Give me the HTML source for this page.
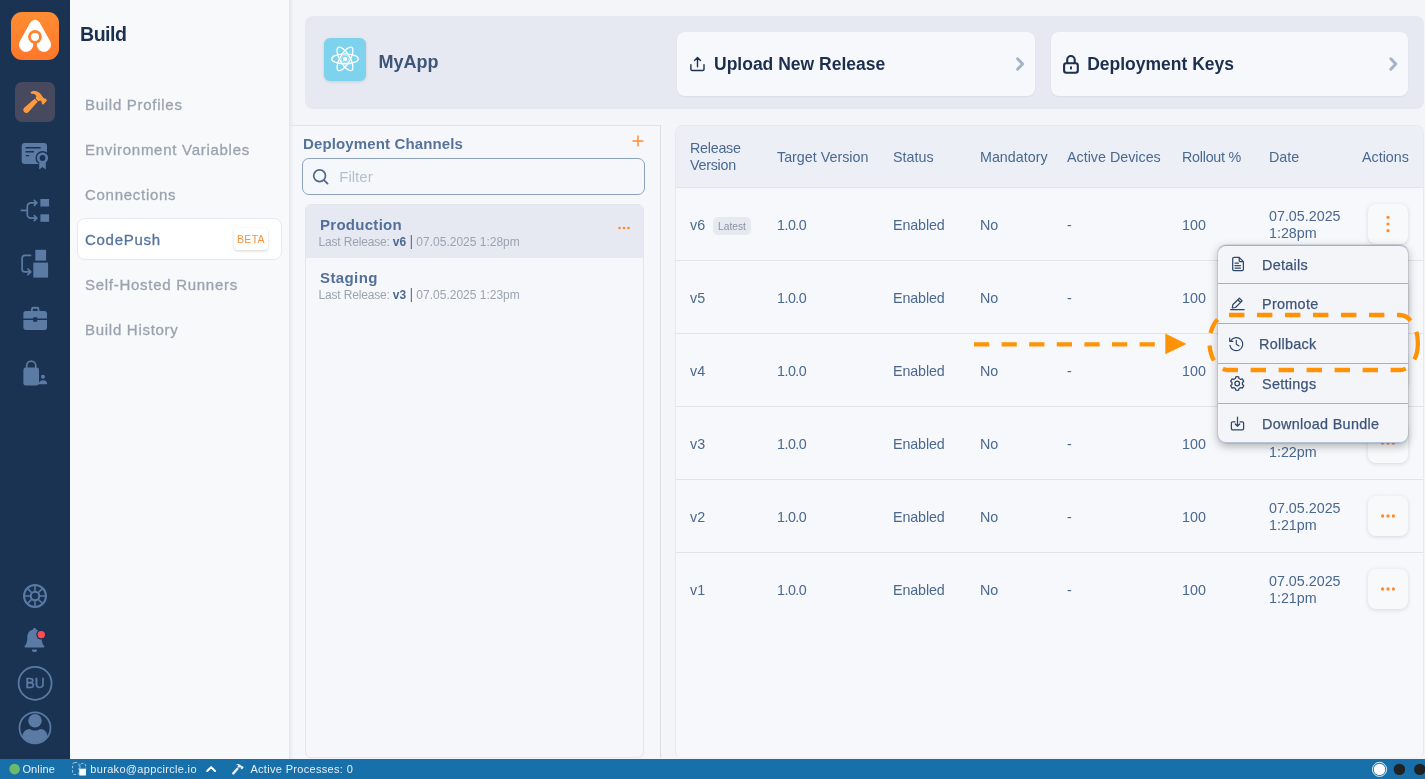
<!DOCTYPE html>
<html lang="en">
<head>
<meta charset="utf-8">
<title>CodePush - MyApp</title>
<style>
*{box-sizing:border-box;margin:0;padding:0}
html,body{width:1425px;height:779px;overflow:hidden}
body{font-family:"Liberation Sans",sans-serif;background:#f3f5f9;color:#4a6990;position:relative}
.abs{position:absolute}
#w{position:absolute;left:0;top:0;width:1425px;height:779px;will-change:transform}
#rail{left:0;top:0;width:70px;height:759px;background:#1a3352}
#nav{left:70px;top:0;width:219px;height:759px;background:#f8f9fb}
#nb{left:289px;top:0;width:5px;height:759px;background:linear-gradient(to right,#dfe4ed 0,#e9ecf2 35%,#f3f5f9 100%)}
#status{left:0;top:759px;width:1425px;height:20px;background:#1870ab;color:#e8eef5;font-size:11px;letter-spacing:.32px;line-height:14px}
#status span{position:absolute;top:3px;white-space:nowrap}
#nav h1{position:absolute;left:10px;top:23.200px;font-size:19.600px;line-height:22px;letter-spacing:-.5px;font-weight:700;color:#1b2f4f}
.ni{-webkit-text-stroke:.3px currentColor;position:absolute;left:15px;font-size:15px;letter-spacing:.72px;color:#9aa3b0;white-space:nowrap;line-height:18px}
#cp{left:7px;top:218px;width:205px;height:42px;background:#fff;border:1px solid #e6e9ef;border-radius:8px}
#beta{left:164px;top:227.500px;width:34px;height:22.500px;background:#fff;border-radius:4px;box-shadow:0 1px 3px rgba(0,0,0,.18);color:#ff8f34;font-size:10.5px;line-height:23px;text-align:center;letter-spacing:.3px}
#hdr{left:305px;top:16px;width:1119px;height:92.500px;background:#e6e9f1;border-radius:8px}
.card{background:#f7f8fb;border-radius:8px;box-shadow:0 1px 2px rgba(0,0,0,.05);height:64px;top:32px}
.card b{position:absolute;top:20.5px;font-size:17.5px;color:#1b2f4f;white-space:nowrap;line-height:22px}
#lp{left:289px;top:125px;width:372px;height:633px;background:linear-gradient(to right,#e1e6ee 0,#ecEff4 2px,#f6f7fa 5px);border-top:1px solid #e1e5ec;border-right:1px solid #d9dee8}
#tbl{left:675px;top:125px;width:749px;height:633px;background:#f7f8fb;border:1px solid #e6e9ef;border-bottom-color:#f2f4f8;border-radius:8px 8px 6px 6px;overflow:hidden}
#th{left:0;top:0;width:749px;height:62px;background:#eceff5;border-bottom:1px solid #e0e4ec}
.t{position:absolute;font-size:14.3px;line-height:17px;color:#4a6990;white-space:nowrap}
.row{position:absolute;left:0;width:749px;height:73px;border-bottom:1px solid #e0e4ec}
.btn{position:absolute;left:1368px;width:40px;height:40px;border-radius:8px;background:#f8f9fb;box-shadow:0 1px 4px rgba(30,50,90,.16)}
#menu{left:1218px;top:245px;width:190px;height:198px;background:#f3f5f9;border-radius:8px;box-shadow:0 3px 10px rgba(0,0,0,.3),0 0 0 1px rgba(120,140,170,.18),inset 0 1px 0 #a0b1cb,inset 0 -1px 0 rgba(140,160,195,.6)}
.mi{-webkit-text-stroke:.25px currentColor;position:absolute;left:44px;font-size:14.400px;letter-spacing:.3px;color:#3e5478;white-space:nowrap;line-height:18px}
.sep{position:absolute;left:0;width:190px;height:1px;background:#a0b1cb}
.ch{font-size:15px;font-weight:700;color:#53709a;line-height:18px;white-space:nowrap}
.lr{font-size:12px;color:#9aa4b1;line-height:14px;white-space:nowrap}
.lr b{color:#4a6990}
.lr i{font-style:normal;color:#66758f;font-size:14.500px;line-height:0;position:relative;top:.3px;margin:0 -.3px 0 0;font-weight:400}
.lr u{text-decoration:none;letter-spacing:-.17px}
</style>
</head>
<body>
<div id="w">
<div id="rail" class="abs"></div>
<svg class="abs" style="left:0;top:0" width="70" height="759" viewBox="0 0 70 759">
<defs><linearGradient id="lg" x1="0" y1="0" x2="0" y2="1"><stop offset="0" stop-color="#ff8d33"/><stop offset="1" stop-color="#ff772b"/></linearGradient></defs>
<rect x="11" y="12" width="48" height="48" rx="11" fill="url(#lg)"/>
<path d="M30.200 22.710A5.500 5.500 0 0 1 40.150 27.340L32.640 47.210A7.100 7.100 0 1 1 19.810 41.220ZM29.850 27.340A5.500 5.500 0 0 1 39.800 22.710L50.190 41.220A7.100 7.100 0 1 1 37.360 47.210Z" fill="#fff"/>
<circle cx="35" cy="36.800" r="5.400" fill="none" stroke="#ff842f" stroke-width="3.050"/>
<rect x="33.200" y="42.500" width="3.600" height="10" fill="#ff7e2d"/>
<circle cx="35" cy="36.800" r="3.900" fill="#fff"/>
<rect x="15" y="82" width="40" height="40" rx="7" fill="#474a5e"/>
<g fill="#ff9a3e"><path d="M34.600 98.700L37.700 101.700L28.600 111.900C27.400 113.200 25.400 113.300 24.200 112.100C23 110.900 23 109 24.200 107.800Z"/><path d="M30.500 92.200C32.500 90.800 36 90.600 38.500 92.200C40.500 93.400 42 95.500 42.800 97.200L44.200 98.400L45.600 98.600L47 100.400L43.200 104.800L41.600 103.300L41.600 101.600L40.400 100.600L38.300 101.200L35.600 98.600L36.300 96.400C35.800 94.800 34.600 93.800 33 93.800L31.500 94Z"/></g>
<g fill="#5b7ba5">
<rect x="21.700" y="143" width="25.300" height="21" rx="3"/>
</g>
<g fill="#1a3352"><rect x="25.500" y="147" width="15.300" height="1.500"/><rect x="25.500" y="151" width="8.500" height="1.500"/><rect x="25.800" y="155" width="3.400" height="1.300"/><circle cx="42.500" cy="158" r="7"/></g>
<g fill="#5b7ba5"><path d="M39.200 162.500h6.600v7l-3.300-2.600-3.300 2.600z"/><circle cx="42.500" cy="158" r="5.600"/></g>
<circle cx="42.500" cy="158" r="2.900" fill="#1a3352"/>
<g fill="#5b7ba5"><rect x="40.400" y="199" width="8.700" height="7.500"/><rect x="40.400" y="214.300" width="8.700" height="7.500"/>
<rect x="33.300" y="249.800" width="10.800" height="10.800" transform="translate(2 0)"/><rect x="33.300" y="262.600" width="14.800" height="15"/></g>
<g fill="none" stroke="#5b7ba5" stroke-width="1.7" stroke-linecap="round" stroke-linejoin="round">
<path d="M21.300 210.300h5.800M36.500 202.800h-5.600a3.600 3.600 0 0 0-3.600 3.600v8.200a3.600 3.600 0 0 0 3.600 3.600h5.600M34.300 200.300l2.600 2.500-2.600 2.500M34.300 215.700l2.600 2.500-2.600 2.500"/>
<path d="M30.500 255.400h-5.400a3 3 0 0 0-3 3v10.500a3 3 0 0 0 3 3h5M28 269.200l2.800 2.700-2.800 2.700"/>
</g>
<g fill="#5b7ba5">
<path d="M31 311v-1.800a2.400 2.400 0 0 1 2.400-2.400h3.600a2.400 2.400 0 0 1 2.400 2.400v1.800h5a2.600 2.600 0 0 1 2.600 2.600v4.800h-9.800v-1.200h-4v1.200h-9.800v-4.800a2.600 2.600 0 0 1 2.600-2.600zm1.800 0h4.800v-1.500a.8.800 0 0 0-.8-.8h-3.200a.8.800 0 0 0-.8.800z"/>
<path d="M23.400 320h9.800v1.700h4v-1.700h9.800v7.300a2.600 2.600 0 0 1-2.600 2.600h-18.400a2.600 2.600 0 0 1-2.600-2.600z"/>
<rect x="23.400" y="367.600" width="15.600" height="18" rx="2.400"/>
<circle cx="43" cy="376.800" r="2"/><path d="M38.800 384.300c0-2.500 1.700-4 4.200-4s4.200 1.500 4.200 4z"/>
</g>
<path d="M26.700 368v-2.400a4.500 4.500 0 0 1 9 0v2.400" fill="none" stroke="#5b7ba5" stroke-width="1.700"/>
<g fill="none" stroke="#5b7ba5"><circle cx="35" cy="596" r="11" stroke-width="2"/><circle cx="35" cy="596" r="4.300" stroke-width="2"/>
<path d="M35 585.500v6M35 600.500v6M24.500 596h6M39.500 596h6M27.600 588.600l4.200 4.200M38.200 599.200l4.200 4.200M42.400 588.600l-4.200 4.200M31.800 599.200l-4.200 4.200" stroke-width="1.500"/>
<circle cx="35.100" cy="683.300" r="16.500" stroke-width="1.700"/><circle cx="35" cy="727.900" r="15.500" stroke-width="1.700"/></g>
<g fill="#5b7ba5">
<g transform="translate(-.3 1.5)"><path d="M33 628.300a1.800 1.800 0 0 1 3.600 0c3.700.9 5.300 3.700 5.300 7.600 0 4.600 1 6.800 2.600 8.700.5.600.1 1.500-.7 1.500h-18.100c-.8 0-1.200-.9-.7-1.500 1.600-1.900 2.600-4.100 2.600-8.700 0-3.900 1.600-6.700 5.400-7.600z"/>
<path d="M32.200 648h5.200a2.600 2.600 0 0 1-5.200 0z"/></g>
<circle cx="35" cy="720.700" r="6.800"/>
<path d="M22.300 736.500c.6-5 3.600-7.200 7.600-7.400 1.500 1 3.200 1.500 5.100 1.500s3.600-.5 5.100-1.500c4 .2 7 2.400 7.600 7.400a15.600 15.600 0 0 1-25.400 0z"/>
</g>
<circle cx="41.300" cy="634.600" r="5" fill="#1a3352"/><circle cx="41.300" cy="634.600" r="3.700" fill="#ff4a55"/>
<text x="35.200" y="688.300" text-anchor="middle" font-family="Liberation Sans, sans-serif" font-size="13.800" font-weight="400" fill="#5b7ba5" stroke="#5b7ba5" stroke-width=".5">BU</text>
</svg>
<div id="nav" class="abs">
  <h1>Build</h1>
  <div class="ni" style="top:96px">Build Profiles</div>
  <div class="ni" style="top:141px">Environment Variables</div>
  <div class="ni" style="top:186px">Connections</div>
  <div id="cp" class="abs"></div>
  <div class="ni" style="top:231px;color:#5673a0">CodePush</div>
  <div id="beta" class="abs">BETA</div>
  <div class="ni" style="top:276px">Self-Hosted Runners</div>
  <div class="ni" style="top:321px">Build History</div>
</div>
<div id="nb" class="abs"></div>
<div id="hdr" class="abs"></div>
<div class="abs" style="left:324px;top:38px;width:42px;height:43px;border-radius:6px;background:#7dd3ee;box-shadow:0 1px 3px rgba(0,0,0,.12)"></div>
<div class="abs" style="left:378.500px;top:50.700px;font-size:18px;font-weight:700;color:#3e5478;line-height:22px">MyApp</div>
<div class="abs card" style="left:677px;width:358px"><b style="left:37px">Upload New Release</b></div>
<div class="abs card" style="left:1051px;width:357px"><b style="left:36.200px">Deployment Keys</b></div>
<svg class="abs" style="left:324px;top:38px" width="42" height="43" viewBox="0 0 42 43" fill="none" stroke="#fff" stroke-width="1.250"><g transform="translate(21 20.900)"><ellipse rx="13.300" ry="5"/><ellipse rx="13.300" ry="5" transform="rotate(60)"/><ellipse rx="13.300" ry="5" transform="rotate(120)"/><circle r="2.200" fill="#fff" stroke="none"/><circle r="3.700" stroke-width=".7" opacity=".6"/></g></svg>
<svg class="abs" style="left:686px;top:52px" width="24" height="24" viewBox="686 52 24 24" fill="none" stroke="#1b2f4f" stroke-width="1.400" stroke-linecap="round" stroke-linejoin="round"><path d="M690.900 64.800v4.400a1.300 1.300 0 0 0 1.300 1.300h10.500a1.300 1.300 0 0 0 1.300-1.300v-4.400M697.500 66.800v-9M694.500 60.600l3-3 3 3"/></svg>
<svg class="abs" style="left:1058px;top:50px" width="26" height="28" viewBox="1058 50 26 28" fill="none" stroke="#1b2f4f" stroke-width="2.100" stroke-linejoin="round"><rect x="1064.100" y="63.200" width="13.700" height="9.600" rx="2.200"/><path d="M1067.200 63v-3.200a3.750 3.750 0 0 1 7.500 0v3.200"/><rect x="1070" y="66.400" width="1.900" height="3" fill="#1b2f4f" stroke="none"/></svg>
<svg class="abs" style="left:1010px;top:52px" width="20" height="24" viewBox="1010 52 20 24" fill="none" stroke="#a3b3ca" stroke-width="3" stroke-linecap="round" stroke-linejoin="round"><path d="M1017.600 58.800l5 5.200-5 5.200"/></svg>
<svg class="abs" style="left:1383px;top:52px" width="20" height="24" viewBox="1383 52 20 24" fill="none" stroke="#a3b3ca" stroke-width="3" stroke-linecap="round" stroke-linejoin="round"><path d="M1390.800 58.800l5 5.200-5 5.200"/></svg>
<div id="lp" class="abs"></div>
<div class="abs" style="left:303px;top:134.800px;font-size:15px;font-weight:700;letter-spacing:.13px;color:#56739b;line-height:18px;white-space:nowrap">Deployment Channels</div>
<svg class="abs" style="left:631px;top:134px" width="14" height="14" viewBox="0 0 14 14"><path d="M7 1.500v11M1.500 7h11" stroke="#ff8a30" stroke-width="1.400" fill="none"/></svg>
<div class="abs" style="left:302px;top:158px;width:343px;height:37px;border:1px solid #8da2c0;border-radius:7px;background:#f6f7fa"></div>
<svg class="abs" style="left:311px;top:167px" width="20" height="20" viewBox="0 0 20 20"><circle cx="8.600" cy="8.700" r="5.900" fill="none" stroke="#4a6990" stroke-width="1.700"/><path d="M13 13.200l3.600 3.500" stroke="#4a6990" stroke-width="1.700" stroke-linecap="round"/></svg>
<div class="abs" style="left:339.300px;top:167.800px;font-size:15px;color:#b3bfd1;line-height:18px">Filter</div>
<div class="abs" style="left:305px;top:204px;width:339px;height:554px;border:1px solid #e3e6ed;border-radius:6px;background:#f6f7fa;overflow:hidden"><div style="height:54px;background:#e6e9f1;margin:-1px -1px 0 -1px"></div></div>
<div class="abs ch" style="left:320px;top:215.800px;letter-spacing:.28px">Production</div>
<div class="abs lr" style="left:318.500px;top:235.100px"><u>Last Release: </u><b>v6</b> <i>|</i> 07.05.2025 1:28pm</div>
<div class="abs ch" style="left:320px;top:268.600px;letter-spacing:.4px">Staging</div>
<div class="abs lr" style="left:318.500px;top:288.100px"><u>Last Release: </u><b>v3</b> <i>|</i> 07.05.2025 1:23pm</div>
<svg class="abs" style="left:617px;top:225px" width="14" height="6" viewBox="0 0 14 6"><g fill="#ff8a30"><circle cx="2.500" cy="3" r="1.300"/><circle cx="7" cy="3" r="1.300"/><circle cx="11.500" cy="3" r="1.300"/></g></svg>
<div id="tbl" class="abs"><div id="th" class="abs"></div>
<div class="row" style="top:62px"></div>
<div class="row" style="top:135px"></div>
<div class="row" style="top:208px"></div>
<div class="row" style="top:281px"></div>
<div class="row" style="top:354px"></div>
<div class="row" style="top:427px;border-bottom:0"></div>
</div>
<div class="t" style="left:690px;top:140px;letter-spacing:-.25px">Release<br>Version</div>
<div class="t" style="left:777px;top:148.5px">Target Version</div>
<div class="t" style="left:893px;top:148.5px">Status</div>
<div class="t" style="left:980px;top:148.5px">Mandatory</div>
<div class="t" style="left:1067px;top:148.5px">Active Devices</div>
<div class="t" style="left:1182px;top:148.5px;letter-spacing:-.25px">Rollout %</div>
<div class="t" style="left:1269px;top:148.5px">Date</div>
<div class="t" style="left:1362px;top:148.5px">Actions</div>
<div class="t" style="left:690px;top:216.5px">v6</div><div class="t" style="left:777px;top:216.5px;letter-spacing:-.5px">1.0.0</div><div class="t" style="left:893px;top:216.5px;letter-spacing:-.12px">Enabled</div><div class="t" style="left:980px;top:216.5px">No</div><div class="t" style="left:1067px;top:216.5px">-</div><div class="t" style="left:1182px;top:216.5px">100</div><div class="t" style="left:1269px;top:207.5px">07.05.2025<br>1:28pm</div><div class="btn" style="top:204px"></div>
<div class="t" style="left:690px;top:289.5px">v5</div><div class="t" style="left:777px;top:289.5px;letter-spacing:-.5px">1.0.0</div><div class="t" style="left:893px;top:289.5px;letter-spacing:-.12px">Enabled</div><div class="t" style="left:980px;top:289.5px">No</div><div class="t" style="left:1067px;top:289.5px">-</div><div class="t" style="left:1182px;top:289.5px">100</div><div class="t" style="left:1269px;top:280.5px">07.05.2025<br>1:27pm</div><div class="btn" style="top:277px"></div>
<svg class="abs" style="left:1380px;top:293px" width="16" height="8" viewBox="0 0 16 8"><g fill="#ff8a30"><circle cx="2.600" cy="4" r="1.650"/><circle cx="8" cy="4" r="1.650"/><circle cx="13.400" cy="4" r="1.650"/></g></svg>
<div class="t" style="left:690px;top:362.5px">v4</div><div class="t" style="left:777px;top:362.5px;letter-spacing:-.5px">1.0.0</div><div class="t" style="left:893px;top:362.5px;letter-spacing:-.12px">Enabled</div><div class="t" style="left:980px;top:362.5px">No</div><div class="t" style="left:1067px;top:362.5px">-</div><div class="t" style="left:1182px;top:362.5px">100</div><div class="t" style="left:1269px;top:353.5px">07.05.2025<br>1:25pm</div><div class="btn" style="top:350px"></div>
<svg class="abs" style="left:1380px;top:366px" width="16" height="8" viewBox="0 0 16 8"><g fill="#ff8a30"><circle cx="2.600" cy="4" r="1.650"/><circle cx="8" cy="4" r="1.650"/><circle cx="13.400" cy="4" r="1.650"/></g></svg>
<div class="t" style="left:690px;top:435.5px">v3</div><div class="t" style="left:777px;top:435.5px;letter-spacing:-.5px">1.0.0</div><div class="t" style="left:893px;top:435.5px;letter-spacing:-.12px">Enabled</div><div class="t" style="left:980px;top:435.5px">No</div><div class="t" style="left:1067px;top:435.5px">-</div><div class="t" style="left:1182px;top:435.5px">100</div><div class="t" style="left:1269px;top:426.5px">07.05.2025<br>1:22pm</div><div class="btn" style="top:423px"></div>
<svg class="abs" style="left:1380px;top:439px" width="16" height="8" viewBox="0 0 16 8"><g fill="#ff8a30"><circle cx="2.600" cy="4" r="1.650"/><circle cx="8" cy="4" r="1.650"/><circle cx="13.400" cy="4" r="1.650"/></g></svg>
<div class="t" style="left:690px;top:508.5px">v2</div><div class="t" style="left:777px;top:508.5px;letter-spacing:-.5px">1.0.0</div><div class="t" style="left:893px;top:508.5px;letter-spacing:-.12px">Enabled</div><div class="t" style="left:980px;top:508.5px">No</div><div class="t" style="left:1067px;top:508.5px">-</div><div class="t" style="left:1182px;top:508.5px">100</div><div class="t" style="left:1269px;top:499.5px">07.05.2025<br>1:21pm</div><div class="btn" style="top:496px"></div>
<svg class="abs" style="left:1380px;top:512px" width="16" height="8" viewBox="0 0 16 8"><g fill="#ff8a30"><circle cx="2.600" cy="4" r="1.650"/><circle cx="8" cy="4" r="1.650"/><circle cx="13.400" cy="4" r="1.650"/></g></svg>
<div class="t" style="left:690px;top:581.5px">v1</div><div class="t" style="left:777px;top:581.5px;letter-spacing:-.5px">1.0.0</div><div class="t" style="left:893px;top:581.5px;letter-spacing:-.12px">Enabled</div><div class="t" style="left:980px;top:581.5px">No</div><div class="t" style="left:1067px;top:581.5px">-</div><div class="t" style="left:1182px;top:581.5px">100</div><div class="t" style="left:1269px;top:572.5px">07.05.2025<br>1:21pm</div><div class="btn" style="top:569px"></div>
<svg class="abs" style="left:1380px;top:585px" width="16" height="8" viewBox="0 0 16 8"><g fill="#ff8a30"><circle cx="2.600" cy="4" r="1.650"/><circle cx="8" cy="4" r="1.650"/><circle cx="13.400" cy="4" r="1.650"/></g></svg>
<svg class="abs" style="left:1384px;top:213px" width="8" height="22" viewBox="0 0 8 22"><g fill="#ff8a30"><circle cx="4" cy="4.300" r="1.600"/><circle cx="4" cy="11" r="1.600"/><circle cx="4" cy="17.700" r="1.600"/></g></svg>
<div class="abs" style="left:713px;top:217.300px;width:38px;height:17.500px;border-radius:5px;background:#e6e9f0;color:#8a94a3;font-size:10.200px;line-height:19px;text-align:center">Latest</div>
<div id="menu" class="abs"><div class="sep" style="top:38px"></div><div class="sep" style="top:78px"></div><div class="sep" style="top:118px"></div><div class="sep" style="top:158px"></div><div class="mi" style="left:44px;top:10.9px">Details</div><div class="mi" style="left:44px;top:49.7px">Promote</div><div class="mi" style="left:41px;top:90.2px">Rollback</div><div class="mi" style="left:44px;top:130.2px">Settings</div><div class="mi" style="left:44px;top:170.3px">Download Bundle</div></div>
<svg class="abs" style="left:1220px;top:250px" width="40" height="190" viewBox="1220 250 40 190" fill="none" stroke="#2f4668" stroke-width="1.250" stroke-linecap="round" stroke-linejoin="round">
<path d="M1234 257.400h5.200l4.200 4.200v7.700a1.300 1.300 0 0 1-1.300 1.300h-8.100a1.300 1.300 0 0 1-1.300-1.300v-10.600a1.300 1.300 0 0 1 1.300-1.300zM1239.200 257.400v3a1.200 1.200 0 0 0 1.200 1.200h3M1235 263h3.500M1235 265.500h5.500M1235 268h5.500"/>
<path d="M1239.400 298.200l2.700 2.700-6.600 6.600-3.200.500.500-3.200zM1237.800 299.800l2.700 2.700M1230.600 309.600h13.500"/>
<path d="M1230.600 341A6.500 6.500 0 1 1 1229.900 345.300M1229.700 338.100v3.200h3.200M1236.300 340.400v3.900l2.700 1.700" stroke-width="1.150"/>
<path d="M1235.79 376.85A6.8 6.8 0 0 1 1238.61 376.85L1239.00 378.51A5.3 5.3 0 0 1 1240.62 379.45L1242.25 378.95A6.8 6.8 0 0 1 1243.67 381.40L1242.42 382.56A5.3 5.3 0 0 1 1242.42 384.44L1243.67 385.60A6.8 6.8 0 0 1 1242.25 388.05L1240.62 387.55A5.3 5.3 0 0 1 1239.00 388.49L1238.61 390.15A6.8 6.8 0 0 1 1235.79 390.15L1235.40 388.49A5.3 5.3 0 0 1 1233.78 387.55L1232.15 388.05A6.8 6.8 0 0 1 1230.73 385.60L1231.98 384.44A5.3 5.3 0 0 1 1231.98 382.56L1230.73 381.40A6.8 6.8 0 0 1 1232.15 378.95L1233.78 379.45A5.3 5.3 0 0 1 1235.40 378.51Z" stroke-width="1.300"/><circle cx="1237.200" cy="383.500" r="2.300" stroke-width="1.300"/>
<path d="M1235 421.800h-2.300a1.300 1.300 0 0 0-1.300 1.300v5.500a1.300 1.300 0 0 0 1.300 1.300h9.600a1.300 1.300 0 0 0 1.300-1.300v-5.500a1.300 1.300 0 0 0-1.300-1.300h-2.300M1237.500 417.200v8.800M1235.300 424l2.200 2.200 2.200-2.200"/>
</svg>
<svg class="abs" style="left:960px;top:300px" width="465" height="90" viewBox="960 300 465 90">
<path d="M974 344.300H1160" stroke="#ff9305" stroke-width="4.300" stroke-dasharray="15.200 12.400" fill="none"/>
<path d="M1165.300 333.600L1186.500 344L1165.300 354.300Z" fill="#ff9305"/>
<path d="M1417.800 344.500A18 25.500 0 0 1 1399.800 370H1227.500A18 27.500 0 0 1 1209.500 342.500A18 27.500 0 0 1 1227.500 315H1399.800A18 27.500 0 0 1 1417.800 342.500V344.500" fill="none" stroke="#ff9305" stroke-width="4.300" stroke-dasharray="15.400 12.600"/>
</svg>
<div id="status" class="abs">
  <span style="left:22.400px;letter-spacing:.13px">Online</span>
  <span style="left:90.300px">burako@appcircle.io</span>
  <span style="left:250.400px">Active Processes: 0</span>
  <svg style="position:absolute;left:0;top:0" width="1425" height="20" viewBox="0 759 1425 20">
    <circle cx="14.600" cy="769.100" r="5.300" fill="#6dbb6a"/>
    <g fill="none" stroke="#e8eef5" stroke-width=".8" opacity=".85"><rect x="72.600" y="762.600" width="6.500" height="12" rx="2" stroke-dasharray="2.500 1.800"/><path d="M80 768.500v-2.300a2.900 2.900 0 0 1 5.800 0v2.300" stroke-dasharray="3 1.200"/></g>
    <rect x="79.300" y="768.700" width="6.600" height="6.800" fill="#fff"/>
    <path d="M207.200 771l3.900-3.900 3.900 3.900" fill="none" stroke="#fff" stroke-width="2" stroke-linecap="round" stroke-linejoin="round"/>
    <g fill="#e8eef5"><path d="M237.400 767.300l1.500 1.400-4.700 5.500c-.5.600-1.300.6-1.800.1-.5-.5-.5-1.200 0-1.700z"/><path d="M235.600 764.500c1.500-.9 3.400-.8 4.600.2l1.600 1.600.7-.2 1.300 1.300-2 2.100-1.200-1.200.1-.8-.7-.6-1 1-1.600-1.500.9-1c-.8-.6-1.700-.9-2.700-.9z"/></g>
    <circle cx="1379.500" cy="769.400" r="5.700" fill="#fff"/>
    <circle cx="1379.500" cy="769.400" r="7.050" fill="none" stroke="#fff" stroke-width=".9"/>
    <circle cx="1399.400" cy="769.400" r="5.700" fill="#222"/><circle cx="1419.800" cy="769.400" r="5.700" fill="#222"/>
  </svg>
</div>
</div>
</body>
</html>
